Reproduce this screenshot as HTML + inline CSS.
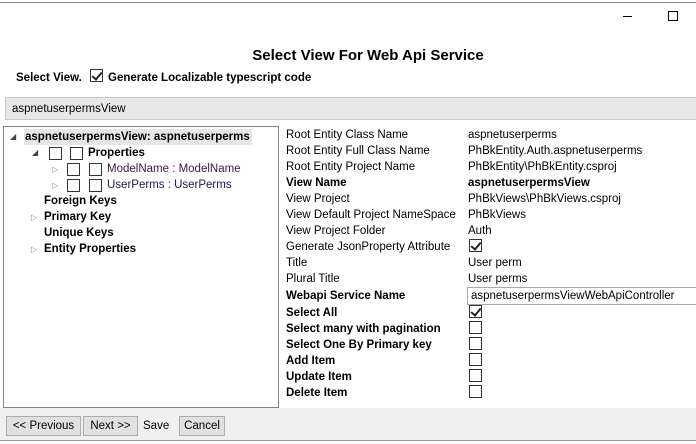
<!DOCTYPE html>
<html><head><meta charset="utf-8"><style>
*{margin:0;padding:0;box-sizing:border-box}
body{width:696px;height:444px;background:#fff;position:relative;overflow:hidden;font-family:"Segoe UI","Liberation Sans",sans-serif;font-size:11.5px;color:#000}
.a{position:absolute;white-space:nowrap;line-height:16px;padding-top:1px}
.b{font-weight:bold}
.cb{position:absolute;width:13px;height:13px;border:1px solid #333;background:#fff}
.ck::after{content:"";position:absolute;left:3px;top:0px;width:4px;height:8px;border:solid #222;border-width:0 2px 2px 0;transform:rotate(40deg)}
.tri{position:absolute;font-size:8px;color:#888;line-height:10px}
.btn{position:absolute;top:416px;height:20px;border:1px solid #adadad;background:#e1e1e1;line-height:19px;text-align:center}
</style></head><body>
<div style="position:absolute;left:0;top:0;width:696px;height:3px;background:#fff;border-bottom:1px solid #888"></div>
<div style="position:absolute;left:623px;top:16px;width:9px;height:1px;background:#000"></div>
<div style="position:absolute;left:668px;top:11px;width:10px;height:10px;border:1px solid #000"></div>
<div class="a b" style="left:0;width:736px;text-align:center;top:45px;font-size:15px;line-height:20px">Select View For Web Api Service</div>
<div class="a b" style="left:16px;top:69px">Select View.</div>
<div class="cb ck" style="left:90px;top:69px"></div>
<div class="a b" style="left:108px;top:69px">Generate Localizable typescript code</div>
<div style="position:absolute;left:5px;top:97px;width:700px;height:23px;background:#e8e8e8;border:1px solid #c8c8c8"></div>
<div class="a" style="left:12px;top:100px">aspnetuserpermsView</div>
<div style="position:absolute;left:3px;top:126px;width:276px;height:282px;border:1px solid #828282;background:#fff"></div>
<div style="position:absolute;left:24px;top:129px;width:228px;height:16px;background:#e6e6e6"></div>
<div class="tri" style="left:10px;top:132px;color:#444">◢</div>
<div class="a b" style="left:25px;top:128px">aspnetuserpermsView: aspnetuserperms</div>
<div class="tri" style="left:32px;top:148px;color:#444">◢</div>
<div class="cb" style="left:49px;top:147px"></div><div class="cb" style="left:70px;top:147px"></div>
<div class="a b" style="left:88px;top:144px">Properties</div>
<div class="tri" style="left:52px;top:165px">▷</div>
<div class="cb" style="left:67px;top:163px"></div><div class="cb" style="left:89px;top:163px"></div>
<div class="a" style="left:107px;top:160px;color:#3c1a3c">ModelName : ModelName</div>
<div class="tri" style="left:52px;top:181px">▷</div>
<div class="cb" style="left:67px;top:179px"></div><div class="cb" style="left:89px;top:179px"></div>
<div class="a" style="left:107px;top:176px;color:#1a1a50">UserPerms : UserPerms</div>
<div class="a b" style="left:44px;top:192px">Foreign Keys</div>
<div class="tri" style="left:31px;top:213px">▷</div>
<div class="a b" style="left:44px;top:208px">Primary Key</div>
<div class="a b" style="left:44px;top:224px">Unique Keys</div>
<div class="tri" style="left:31px;top:245px">▷</div>
<div class="a b" style="left:44px;top:240px">Entity Properties</div>

<div class="a" style="left:286px;top:126px">Root Entity Class Name</div><div class="a" style="left:468px;top:126px">aspnetuserperms</div>
<div class="a" style="left:286px;top:142px">Root Entity Full Class Name</div><div class="a" style="left:468px;top:142px">PhBkEntity.Auth.aspnetuserperms</div>
<div class="a" style="left:286px;top:158px">Root Entity Project Name</div><div class="a" style="left:468px;top:158px">PhBkEntity\PhBkEntity.csproj</div>
<div class="a b" style="left:286px;top:174px">View Name</div><div class="a b" style="left:468px;top:174px">aspnetuserpermsView</div>
<div class="a" style="left:286px;top:190px">View Project</div><div class="a" style="left:468px;top:190px">PhBkViews\PhBkViews.csproj</div>
<div class="a" style="left:286px;top:206px">View Default Project NameSpace</div><div class="a" style="left:468px;top:206px">PhBkViews</div>
<div class="a" style="left:286px;top:222px">View Project Folder</div><div class="a" style="left:468px;top:222px">Auth</div>
<div class="a" style="left:286px;top:238px">Generate JsonProperty Attribute</div><div class="cb ck" style="left:469px;top:239px"></div>
<div class="a" style="left:286px;top:254px">Title</div><div class="a" style="left:468px;top:254px">User perm</div>
<div class="a" style="left:286px;top:270px">Plural Title</div><div class="a" style="left:468px;top:270px">User perms</div>
<div class="a b" style="left:286px;top:287px">Webapi Service Name</div>
<div style="position:absolute;left:467px;top:287px;width:240px;height:18px;border:1px solid #aaa;background:#fff"></div>
<div class="a" style="left:471px;top:287px">aspnetuserpermsViewWebApiController</div>
<div class="a b" style="left:286px;top:304px">Select All</div><div class="cb ck" style="left:469px;top:305px"></div>
<div class="a b" style="left:286px;top:320px">Select many with pagination</div><div class="cb" style="left:469px;top:321px"></div>
<div class="a b" style="left:286px;top:336px">Select One By Primary key</div><div class="cb" style="left:469px;top:337px"></div>
<div class="a b" style="left:286px;top:352px">Add Item</div><div class="cb" style="left:469px;top:353px"></div>
<div class="a b" style="left:286px;top:368px">Update Item</div><div class="cb" style="left:469px;top:369px"></div>
<div class="a b" style="left:286px;top:384px">Delete Item</div><div class="cb" style="left:469px;top:385px"></div>

<div style="position:absolute;left:0;top:408px;width:696px;height:33px;background:#f0f0f0;border-bottom:1px solid #999"></div>
<div class="btn" style="left:6px;width:75px">&lt;&lt; Previous</div>
<div class="btn" style="left:83px;width:55px">Next &gt;&gt;</div>
<div class="a" style="left:143px;top:417px">Save</div>
<div class="btn" style="left:179px;width:46px">Cancel</div>
</body></html>
